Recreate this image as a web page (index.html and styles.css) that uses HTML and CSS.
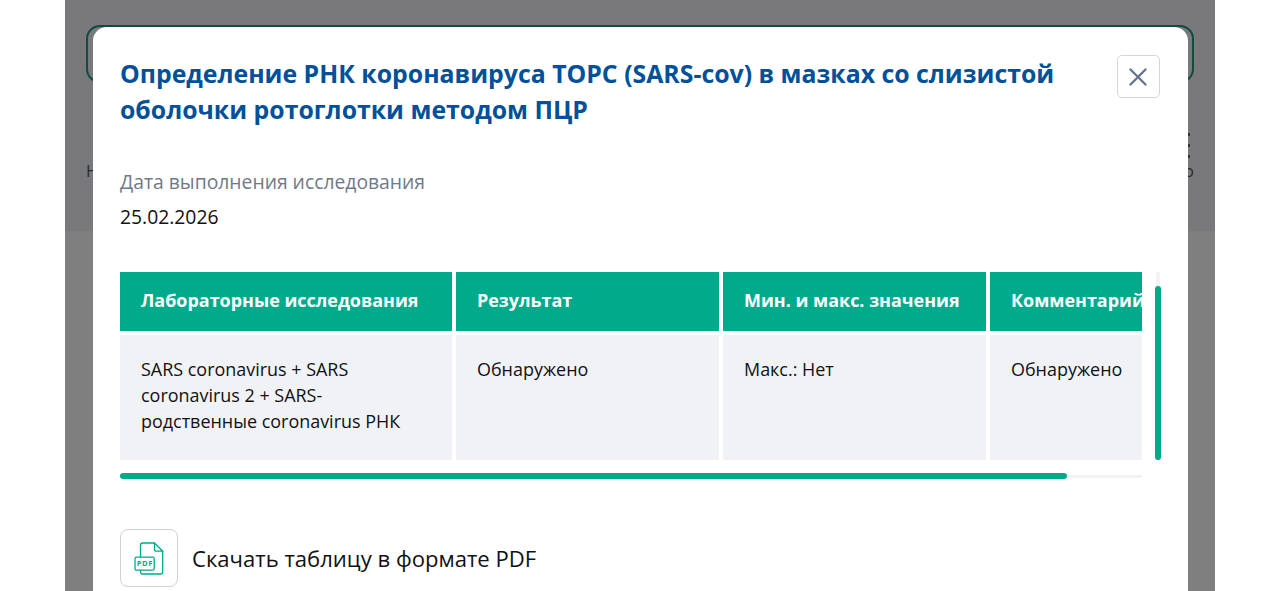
FILE: index.html
```html
<!DOCTYPE html>
<html lang="ru">
<head>
    <meta charset="UTF-8">
    <meta name="viewport" content="width=device-width, initial-scale=1.0">
    <title>Результаты исследования</title>
    <link rel="stylesheet" href="styles.css">
</head>
<body>
    <div class="page">
        <div class="page-header">
            <div class="search-box"></div>
            <div class="page-nav">
                <span class="nav-item">Н</span>
                <span class="nav-item nav-more">
                    <span class="nav-dots"><i></i><i></i><i></i></span>
                    о
                </span>
            </div>
        </div>

        <div class="overlay">
            <div class="modal">
                <div class="modal-header">
                    <h1>Определение РНК коронавируса ТОРС (SARS-cov) в мазках со слизистой оболочки ротоглотки методом ПЦР</h1>
                    <button type="button" class="close-button" aria-label="Закрыть">
                        <svg width="18" height="18" viewBox="0 0 18 18" fill="none" stroke="#64748b" stroke-width="2.3" stroke-linecap="round">
                            <path d="M1.5 1.5L16.5 16.5M16.5 1.5L1.5 16.5"/>
                        </svg>
                    </button>
                </div>

                <p class="date-label">Дата выполнения исследования</p>
                <p class="date-value">25.02.2026</p>

                <div class="table-area">
                    <div class="table-scroll">
                        <div class="results">
                            <div class="cell head">Лабораторные исследования</div>
                            <div class="cell head">Результат</div>
                            <div class="cell head">Мин. и макс. значения</div>
                            <div class="cell head">Комментарий</div>
                            <div class="cell">SARS coronavirus + SARS coronavirus 2 + SARS-родственные coronavirus РНК</div>
                            <div class="cell">Обнаружено</div>
                            <div class="cell">Макс.: Нет</div>
                            <div class="cell">Обнаружено</div>
                        </div>
                    </div>
                    <div class="scrollbar-y"><div class="thumb-y"></div></div>
                    <div class="scrollbar-x"><div class="thumb-x"></div></div>
                </div>

                <a class="download" href="#">
                    <span class="download-icon">
                        <svg width="30" height="33" viewBox="0 0 30 33" fill="none" stroke="#02aa8c" stroke-width="1.3" stroke-linejoin="round" stroke-linecap="round">
                            <path d="M6.5 14.5V3.2Q6.5 1 8.7 1H20.5L28.7 9.2V29.8Q28.7 32 26.5 32H8.7Q6.5 32 6.5 29.8V28.3"/>
                            <path d="M20.5 1V7.2Q20.5 9.2 22.5 9.2H28.7"/>
                            <rect x="1" y="15.2" width="19.2" height="13" rx="1.5"/>
                            <text class="pdf-text" x="10.9" y="24.4">PDF</text>
                        </svg>
                    </span>
                    Скачать таблицу в формате PDF
                </a>
            </div>
        </div>
    </div>
</body>
</html>
```
FILE: styles.css
```css
* {
    box-sizing: border-box;
}

body {
    margin: 0;
    background: #fff;
    color: #111;
    font-family: "Open Sans", "Noto Sans", sans-serif;
    overflow: hidden;
}

.page {
    position: relative;
    width: 1150px;
    height: 591px;
    margin: 0 auto;
    background: #fff;
    overflow: hidden;
}

.page-header {
    height: 231px;
    padding: 25px 21px 0;
    background: #f2f3f7;
}

.search-box {
    height: 58px;
    border: 2px solid #1f9a80;
    border-radius: 14px;
}

.page-nav {
    display: flex;
    justify-content: space-between;
    align-items: flex-end;
    margin-top: 50px;
    font-size: 16.5px;
    font-weight: 500;
    line-height: 24px;
    color: #555;
}

.nav-more {
    display: flex;
    flex-direction: column;
    align-items: flex-end;
}

.nav-dots {
    display: flex;
    flex-direction: column;
    gap: 8px;
    margin-right: 4px;
    padding-bottom: 1px;
}

.nav-dots i {
    width: 3px;
    height: 3px;
    background: #666;
}

/* Modal */
.overlay {
    position: absolute;
    inset: 0;
    padding: 27px 27.5px 0;
    background: rgba(0, 0, 0, 0.5);
}

.modal {
    height: 620px;
    padding: 28px 28px 0 27.5px;
    background: #fff;
    border-radius: 14px;
}

.modal-header {
    display: flex;
    justify-content: space-between;
    align-items: flex-start;
}

h1 {
    width: 960px;
    margin: 0;
    font-size: 24.84px;
    line-height: 36px;
    color: #01509a;
}

.close-button {
    display: flex;
    align-items: center;
    justify-content: center;
    width: 43px;
    height: 43px;
    padding: 0;
    background: #fff;
    border: 1px solid #d5d7dc;
    border-radius: 5px;
}

.date-label,
.date-value {
    margin: 0;
    font-size: 19.32px;
    line-height: 34px;
}

.date-label {
    margin-top: 38px;
    color: #707988;
}

.date-value {
    margin: 1px 0 38px;
}

/* Results table */
.table-area {
    display: grid;
    grid-template-columns: 1022px 6px;
    column-gap: 13px;
    row-gap: 13px;
}

.table-scroll {
    overflow: hidden;
}

.results {
    display: grid;
    grid-template-columns: 332px 263px 263px 263px;
    grid-template-rows: 59px 125px;
    gap: 4px;
}

.cell {
    padding: 21px;
    background: #f1f2f6;
    font-size: 17.94px;
    line-height: 26px;
}

.head {
    padding: 15px 21px;
    background: #02aa8c;
    color: #fff;
    font-weight: 700;
    white-space: nowrap;
}

.scrollbar-y {
    display: flex;
    align-items: flex-end;
    background: linear-gradient(#f3f3f5, #f3f3f5) center / 4px 100% no-repeat;
}

.thumb-y {
    width: 6px;
    height: 174px;
    border-radius: 3px;
    background: #02aa8c;
}

.scrollbar-x {
    background: linear-gradient(#f3f3f5, #f3f3f5) center / 100% 3px no-repeat;
}

.thumb-x {
    width: 947px;
    height: 6px;
    border-radius: 3px;
    background: #02aa8c;
}

/* Download link */
.download {
    display: flex;
    align-items: center;
    gap: 14px;
    margin-top: 50px;
    font-size: 22.08px;
    color: #111;
    text-decoration: none;
}

.download-icon {
    display: flex;
    align-items: center;
    justify-content: center;
    width: 58px;
    height: 58px;
    border: 1px solid #ced1d6;
    border-radius: 8px;
}

.pdf-text {
    font-size: 7.6px;
    font-weight: 700;
    letter-spacing: 0.6px;
    text-anchor: middle;
    fill: #02aa8c;
    stroke: none;
}
```
